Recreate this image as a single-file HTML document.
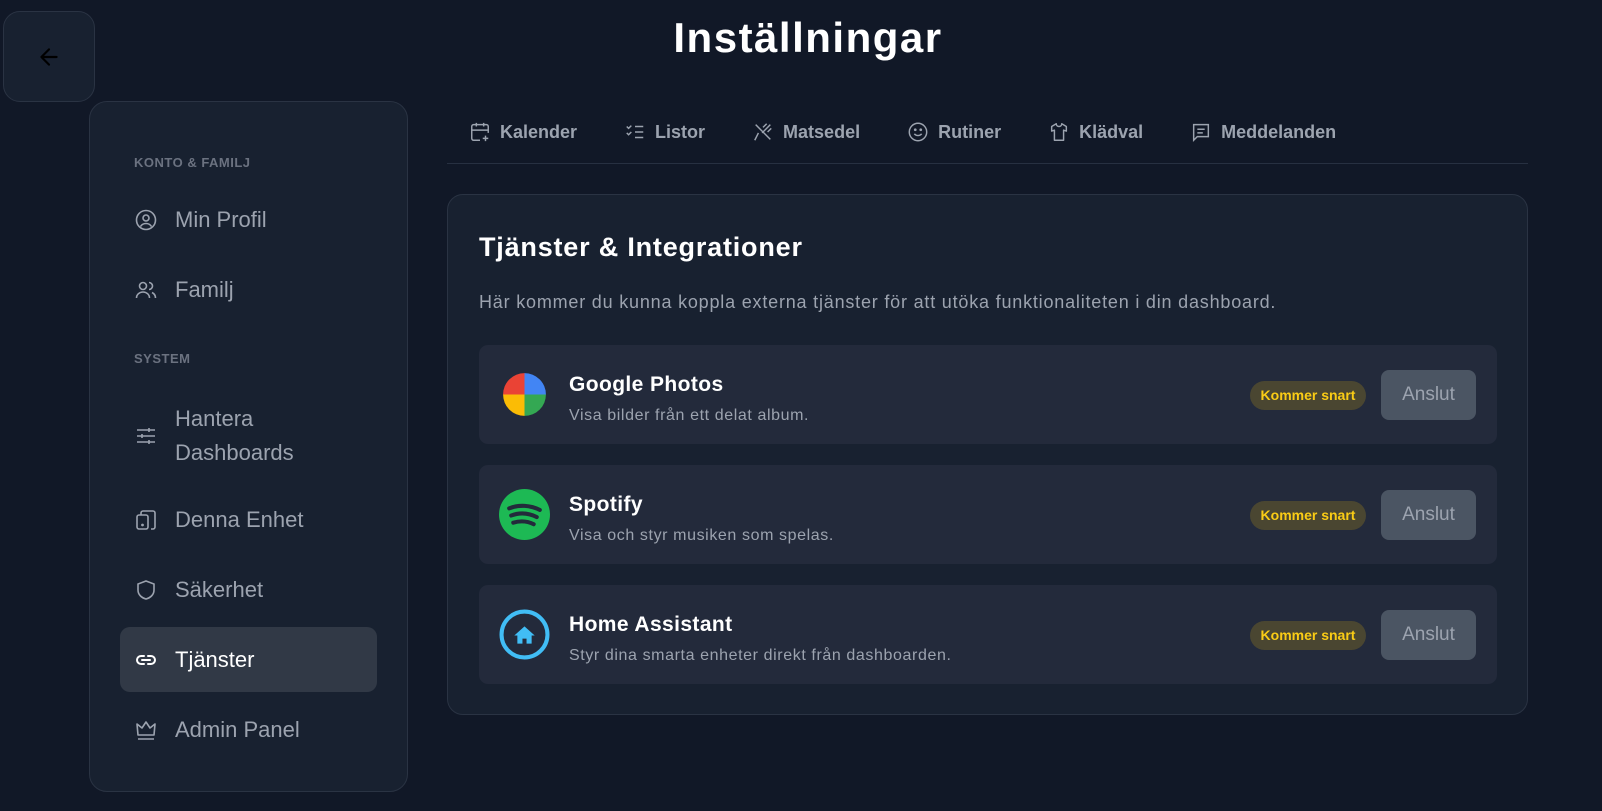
<!DOCTYPE html>
<html><head><meta charset="utf-8"><style>
*{box-sizing:border-box;margin:0;padding:0}
body{width:1602px;height:811px;background:#111827;font-family:"Liberation Sans",sans-serif;position:relative;overflow:hidden;color:#d1d5db}
.abs{position:absolute}
.back{left:3px;top:11px;width:92px;height:91px;border-radius:17px;background:#182130;border:1px solid #2a3343;display:flex;align-items:center;justify-content:center}
h1{position:absolute;left:0;width:1616px;text-align:center;top:14px;font-size:42px;font-weight:bold;color:#fff;letter-spacing:1.5px}
.side{left:89px;top:101px;width:319px;height:691px;border-radius:18px;background:#182130;border:1px solid #2a3343}
.lbl{position:absolute;left:134px;font-size:13px;font-weight:bold;color:#6b7280;letter-spacing:.5px}
.it{position:absolute;left:134px;font-size:22px;color:#9ca3af;display:flex;align-items:center;gap:17px}
.it svg{width:24px;height:24px;flex:none}
.act{left:120px;top:627px;width:257px;height:65px;border-radius:10px;background:#313946}
.tabs{left:469px;top:121px;display:flex;gap:47px;font-size:18px;color:#9ca3af;font-weight:bold}
.tabs span{display:flex;align-items:center;gap:9px}
.tabs svg{width:22px;height:22px}
.line{left:447px;top:163px;width:1081px;height:1px;background:#273041}
.card{left:447px;top:194px;width:1081px;height:521px;border-radius:16px;background:#182130;border:1px solid #2a3343}
.row{position:absolute;left:479px;width:1018px;height:99px;border-radius:9px;background:#232a3b}
.row .ic{position:absolute;left:20px;top:24px;width:51px;height:51px}
.row .t{position:absolute;left:90px;top:28px;font-size:21px;font-weight:bold;color:#fff;letter-spacing:.4px}
.row .s{position:absolute;left:90px;top:62px;font-size:16px;color:#9ca3af;letter-spacing:.6px}
.badge{position:absolute;left:771px;top:36px;width:116px;height:29px;border-radius:15px;background:#4a4631;color:#facc15;font-size:14px;font-weight:bold;text-align:center;line-height:29px}
.btn{position:absolute;left:902px;top:25px;width:95px;height:50px;border-radius:8px;background:#4b5563;color:#9ca3af;font-size:19px;text-align:center;line-height:50px}
</style></head><body>
<div class="abs back"><svg width="26" height="26" viewBox="0 0 24 24" fill="none" stroke="#000" stroke-width="2" stroke-linecap="round" stroke-linejoin="round"><path d="M19 12H5M12 19l-7-7 7-7"/></svg></div>
<h1>Inställningar</h1>
<div class="abs side"></div>
<div class="abs act"></div>
<div class="lbl" style="top:155px">KONTO &amp; FAMILJ</div>
<div class="it" style="top:207px"><svg viewBox="0 0 24 24" fill="none" stroke="#9ca3af" stroke-width="1.6"><circle cx="12" cy="12" r="9.5"/><circle cx="12" cy="10" r="3"/><path d="M6.5 18.5c1.5-2.5 3.5-3 5.5-3s4 .5 5.5 3"/></svg>Min Profil</div>
<div class="it" style="top:277px"><svg viewBox="0 0 24 24" fill="none" stroke="#9ca3af" stroke-width="1.6"><circle cx="9" cy="8" r="3.5"/><path d="M2.5 20c0-3.5 3-6 6.5-6s6.5 2.5 6.5 6M15 4.5a3.5 3.5 0 0 1 0 7M18 14.5c2 1 3.5 3 3.5 5.5"/></svg>Familj</div>
<div class="lbl" style="top:351px">SYSTEM</div>
<div class="it" style="top:402px;align-items:flex-start;line-height:34px"><svg viewBox="0 0 24 24" fill="none" stroke="#9ca3af" stroke-width="1.6" style="margin-top:22px"><path d="M3 6h18M3 12h18M3 18h18M15 4v4M8 10v4M15 16v4"/></svg><span>Hantera<br>Dashboards</span></div>
<div class="it" style="top:507px"><svg viewBox="0 0 24 24" fill="none" stroke="#9ca3af" stroke-width="1.6"><rect x="3" y="7" width="11" height="14" rx="2"/><path d="M7 7V5a2 2 0 0 1 2-2h10a2 2 0 0 1 2 2v14a2 2 0 0 1-2 2h-2"/><circle cx="8.5" cy="17" r=".6" fill="#9ca3af"/></svg>Denna Enhet</div>
<div class="it" style="top:577px"><svg viewBox="0 0 24 24" fill="none" stroke="#9ca3af" stroke-width="1.6"><path d="M12 3l8 3v6c0 5-4 8-8 9-4-1-8-4-8-9V6z"/></svg>Säkerhet</div>
<div class="it" style="top:647px;color:#fff"><svg viewBox="0 0 24 24" fill="none" stroke="#fff" stroke-width="2" stroke-linecap="round"><path d="M10 8H7a4 4 0 0 0 0 8h3M14 8h3a4 4 0 0 1 0 8h-3M8 12h8"/></svg>Tjänster</div>
<div class="it" style="top:717px"><svg viewBox="0 0 24 24" fill="none" stroke="#9ca3af" stroke-width="1.6" stroke-linejoin="round"><path d="M4 17L3 6l5 4 4-6 4 6 5-4-1 11zM4 21h16"/></svg>Admin Panel</div>

<div class="abs tabs">
<span><svg viewBox="0 0 24 24" fill="none" stroke="#9ca3af" stroke-width="1.6"><path d="M12 21H5a2 2 0 0 1-2-2V6a2 2 0 0 1 2-2h14a2 2 0 0 1 2 2v7M3 10h18M8 2v4M16 2v4M18 16v6M15 19h6"/></svg>Kalender</span>
<span><svg viewBox="0 0 24 24" fill="none" stroke="#9ca3af" stroke-width="1.6"><path d="M3 6l2 2 3-3M3 13l2 2 3-3M12 6h9M12 12h9M12 18h9"/></svg>Listor</span>
<span><svg viewBox="0 0 24 24" fill="none" stroke="#9ca3af" stroke-width="1.6"><path d="M4 4l16 16M20 4l-9 9M16 3l-4 4M21 8l-4 4M7 13l-4 8"/></svg>Matsedel</span>
<span><svg viewBox="0 0 24 24" fill="none" stroke="#9ca3af" stroke-width="1.6"><circle cx="12" cy="12" r="9.5"/><path d="M8 14c2 2.5 6 2.5 8 0"/><circle cx="9" cy="9.5" r=".7" fill="#9ca3af"/><circle cx="15" cy="9.5" r=".7" fill="#9ca3af"/></svg>Rutiner</span>
<span><svg viewBox="0 0 24 24" fill="none" stroke="#9ca3af" stroke-width="1.6" stroke-linejoin="round"><path d="M9 3l-5 3v5l3-1v11h10V10l3 1V6l-5-3c0 2-1.5 3-3 3S9 5 9 3z"/></svg>Klädval</span>
<span><svg viewBox="0 0 24 24" fill="none" stroke="#9ca3af" stroke-width="1.6"><path d="M4 4h16v13H8l-4 4zM8 9h8M8 13h6"/></svg>Meddelanden</span>
</div>
<div class="abs line"></div>
<div class="abs card"></div>
<div class="abs" style="left:479px;top:232px;font-size:27px;font-weight:bold;color:#fff;letter-spacing:.8px">Tjänster &amp; Integrationer</div>
<div class="abs" style="left:479px;top:292px;font-size:18px;color:#9ca3af;letter-spacing:.8px">Här kommer du kunna koppla externa tjänster för att utöka funktionaliteten i din dashboard.</div>

<div class="row" style="top:345px">
<svg class="ic" viewBox="0 0 50 50"><path d="M25 25V4A21 21 0 0 0 4 25z" fill="#ea4335"/><path d="M25 25V4a21 21 0 0 1 21 21z" fill="#4285f4"/><path d="M25 25h21a21 21 0 0 1-21 21z" fill="#34a853"/><path d="M25 25v21A21 21 0 0 1 4 25z" fill="#fbbc05"/></svg>
<div class="t">Google Photos</div><div class="s">Visa bilder från ett delat album.</div>
<div class="badge">Kommer snart</div><div class="btn">Anslut</div></div>

<div class="row" style="top:465px">
<svg class="ic" viewBox="0 0 50 50"><circle cx="25" cy="25" r="25" fill="#1db954"/><path d="M10 19c10-4 21-3 30 1.5M12 26c8-3 17-2.5 25 1.5M14 33c7-2 14-1.5 20 1.5" stroke="#232a3b" stroke-width="4" fill="none" stroke-linecap="round"/></svg>
<div class="t">Spotify</div><div class="s">Visa och styr musiken som spelas.</div>
<div class="badge">Kommer snart</div><div class="btn">Anslut</div></div>

<div class="row" style="top:585px">
<svg class="ic" viewBox="0 0 50 50"><circle cx="25" cy="25" r="22.5" fill="none" stroke="#41bdf5" stroke-width="4"/><path d="M15 26l10-9 10 9h-3v8h-5v-5h-4v5h-5v-8z" fill="#41bdf5"/></svg>
<div class="t">Home Assistant</div><div class="s">Styr dina smarta enheter direkt från dashboarden.</div>
<div class="badge">Kommer snart</div><div class="btn">Anslut</div></div>
</body></html>
